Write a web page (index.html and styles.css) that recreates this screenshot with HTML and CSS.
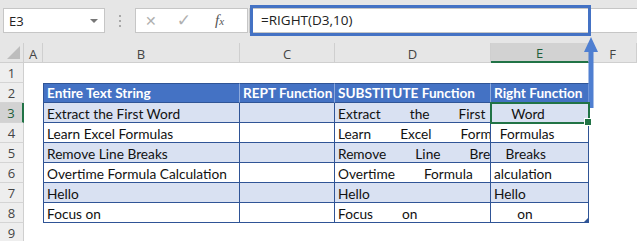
FILE: index.html
```html
<!DOCTYPE html>
<html>
    <head>
        <title>RIGHT Function</title>
        <meta charset="utf-8">
        <link rel="stylesheet" href="styles.css">
    </head>
    <body>
        <div class="app">
            <div class="fbar">
                <div class="namebox"><span>E3</span><i class="drop"></i></div>
                <div class="dots"><i></i><i></i><i></i></div>
                <div class="btns">
                    <span class="ico cancel">&#x2715;</span>
                    <span class="ico enter">&#x2713;</span>
                    <span class="ico fx">f<small>x</small></span>
                </div>
                <div class="formula">=RIGHT(D3,10)</div>
            </div>
            <div class="sheet">
                <div class="hd corner"><i></i></div>
                <div class="hd col">A</div>
                <div class="hd col">B</div>
                <div class="hd col">C</div>
                <div class="hd col">D</div>
                <div class="hd col sel">E</div>
                <div class="hd col">F</div>

                <div class="hd row">1</div>
                <div></div><div></div><div></div><div></div><div></div><div></div>

                <div class="hd row">2</div>
                <div></div>
                <div class="c th first">Entire Text String</div>
                <div class="c th">REPT Function</div>
                <div class="c th">SUBSTITUTE Function</div>
                <div class="c th">Right Function</div>
                <div></div>

                <div class="hd row sel">3</div>
                <div></div>
                <div class="c band first">Extract the First Word</div>
                <div class="c band"></div>
                <div class="c band sp">Extract          the          First          Word</div>
                <div class="c band sp active">      Word</div>
                <div></div>

                <div class="hd row">4</div>
                <div></div>
                <div class="c first">Learn Excel Formulas</div>
                <div class="c"></div>
                <div class="c sp">Learn          Excel          Formulas</div>
                <div class="c sp">  Formulas</div>
                <div></div>

                <div class="hd row">5</div>
                <div></div>
                <div class="c band first">Remove Line Breaks</div>
                <div class="c band"></div>
                <div class="c band sp">Remove          Line          Breaks</div>
                <div class="c band sp">    Breaks</div>
                <div></div>

                <div class="hd row">6</div>
                <div></div>
                <div class="c first">Overtime Formula Calculation</div>
                <div class="c"></div>
                <div class="c sp">Overtime          Formula          Calculation</div>
                <div class="c sp">alculation</div>
                <div></div>

                <div class="hd row">7</div>
                <div></div>
                <div class="c band first">Hello</div>
                <div class="c band"></div>
                <div class="c band sp">Hello</div>
                <div class="c band sp">Hello</div>
                <div></div>

                <div class="hd row">8</div>
                <div></div>
                <div class="c first">Focus on</div>
                <div class="c"></div>
                <div class="c sp">Focus          on</div>
                <div class="c sp last">        on</div>
                <div></div>

                <div class="hd row">9</div>
                <div></div><div></div><div></div><div></div><div></div><div></div>
            </div>

            <div class="callout"></div>
            <svg class="arrow" width="16" height="72" viewBox="0 0 16 72">
                <path d="M8 0 L15 15 L10.5 15 L10.5 71 L5.5 71 L5.5 15 L1 15 Z" fill="#4f7fd1"/>
            </svg>
        </div>
    </body>
</html>
```

FILE: styles.css
```css
* {
    margin: 0;
    padding: 0;
    box-sizing: border-box;
}
body {
    background: #fff;
    font-family: "Open Sans", "Liberation Sans", sans-serif;
    overflow: hidden;
}
.app {
    width: 637px;
    height: 241px;
    position: relative;
    overflow: hidden;
}
.fbar {
    height: 43px;
    background: #e6e6e6;
    display: flex;
    align-items: flex-start;
    padding-top: 8px;
    padding-left: 3px;
}
.namebox {
    width: 102px;
    height: 25px;
    background: #fff;
    border: 1px solid #c6c6c6;
    display: flex;
    align-items: center;
    justify-content: space-between;
    padding: 0 6px 0 5px;
    font-size: 13px;
    color: #222;
}
.drop {
    width: 0;
    height: 0;
    border-left: 4px solid transparent;
    border-right: 4px solid transparent;
    border-top: 4px solid #777;
}
.dots {
    width: 30px;
    height: 25px;
    display: flex;
    flex-direction: column;
    align-items: center;
    justify-content: center;
    gap: 3px;
}
.dots i {
    width: 2px;
    height: 2px;
    background: #a8a8a8;
}
.btns {
    width: 113px;
    height: 25px;
    background: #fff;
    border: 1px solid #c6c6c6;
    display: flex;
    align-items: center;
    padding-left: 9px;
    gap: 20px;
}
.ico {
    color: #b0b0b0;
    font-family: "DejaVu Sans", sans-serif;
    font-size: 14px;
    line-height: 1;
}
.enter {
    font-size: 17px;
}
.fx {
    color: #555;
    font-family: "Liberation Serif", serif;
    font-style: italic;
    font-size: 15px;
    margin-left: 4px;
}
.fx small {
    font-size: 11px;
}
.formula {
    flex: 1;
    height: 25px;
    margin-left: 1px;
    background: #fff;
    border: 1px solid #c6c6c6;
    border-right: none;
    padding-left: 11px;
    font-size: 13.5px;
    line-height: 22px;
    color: #222;
}
.sheet {
    display: grid;
    grid-template-columns: 24px 19px 197px 95px 156px 98px 1fr;
    grid-template-rows: 20px;
    grid-auto-rows: 20px;
}
.hd {
    background: #e6e6e6;
    color: #444;
    font-size: 13px;
    display: flex;
    align-items: center;
    justify-content: center;
}
.col {
    border-right: 1px solid #cfcfcf;
    border-bottom: 1px solid #cfcfcf;
    padding-top: 2px;
}
.row {
    border-bottom: 1px solid #d4d4d4;
    border-right: 1px solid #cfcfcf;
    padding-top: 1px;
    background: #eeeeee;
}
.col.sel {
    background: #d2d2d2;
    border-bottom: 2px solid #217346;
    color: #1e5e3a;
}
.row.sel {
    background: #d2d2d2;
    border-right: 2px solid #217346;
    color: #1e5e3a;
}
.corner {
    border-right: 1px solid #cfcfcf;
    border-bottom: 1px solid #cfcfcf;
    position: relative;
}
.corner i {
    position: absolute;
    right: 3px;
    bottom: 3px;
    width: 0;
    height: 0;
    border-left: 13px solid transparent;
    border-bottom: 13px solid #bdbdbd;
}
.c {
    font-family: Lato, "Liberation Sans", sans-serif;
    font-size: 13.7px;
    color: #111;
    padding-left: 3px;
    padding-top: 2px;
    line-height: 17px;
    white-space: pre;
    overflow: hidden;
    border-right: 1px solid #2f5496;
    border-bottom: 1px solid #2f5496;
}
.c.first {
    border-left: 1px solid #2f5496;
}
.th {
    background: #4472c4;
    color: #fff;
    font-weight: bold;
    font-size: 13.6px;
    border-top: 1px solid #2f5496;
    padding-top: 1px;
    border-right-color: #8eaadc;
}
.band {
    background: #d9e1f2;
}
.sp {
    word-spacing: -0.6px;
}
.active {
    position: relative;
    overflow: visible;
    outline: 2px solid #217346;
    outline-offset: -1px;
    z-index: 1;
}
.active::after {
    content: "";
    position: absolute;
    right: -4px;
    bottom: -4px;
    width: 6px;
    height: 6px;
    background: #217346;
    border: 1px solid #fff;
}
.last {
    position: relative;
}
.last::after {
    content: "";
    position: absolute;
    right: 0;
    bottom: 0;
    width: 0;
    height: 0;
    border-left: 4px solid transparent;
    border-bottom: 4px solid #2f5496;
}
.callout {
    position: absolute;
    left: 250px;
    top: 5px;
    width: 341px;
    height: 31px;
    border: 3px solid #4472c4;
}
.arrow {
    position: absolute;
    left: 583px;
    top: 37px;
}
```
